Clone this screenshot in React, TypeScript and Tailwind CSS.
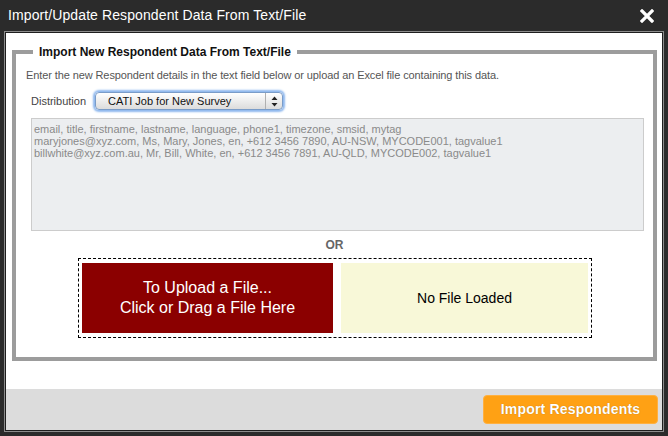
import React from "react";

export default function App() {
  const font = { fontFamily: '"Liberation Sans", Arial, sans-serif' };
  return (
    <div className="w-[668px] h-[436px] bg-[#2b2b2b] flex flex-col overflow-hidden" style={font}>
      <div className="h-[31px] flex items-center justify-between pl-[8px] pr-[14px] shrink-0">
        <span className="text-white text-[14px] tracking-[0.1px]">Import/Update Respondent Data From Text/File</span>
        <svg width="14" height="14" viewBox="0 0 14 14">
          <path d="M2 2 L12 12 M12 2 L2 12" stroke="#ffffff" strokeWidth="3.2" strokeLinecap="square" />
        </svg>
      </div>
      <div className="ml-[4px] w-[660px] h-[401px] border border-[#8c8c8c] shrink-0">
        <div className="w-full h-full border border-[#1e1e1e] bg-white flex flex-col">
          <div className="h-[356px] px-[5px] pl-[6px] shrink-0">
            <fieldset className="mt-[12px] border-4 border-[#9c9c9c] h-[316px]">
              <legend className="ml-[17px] px-[6px] text-[12px] leading-[14px] font-bold text-[#111]">
                Import New Respondent Data From Text/File
              </legend>
              <div className="pt-[9px] pl-[10px] text-[11px] leading-[14px] text-[#555] tracking-[-0.1px]">
                Enter the new Respondent details in the text field below or upload an Excel file containing this data.
              </div>
              <div className="mt-[10px] pl-[15px] h-[18px] flex items-center">
                <span className="text-[11px] text-[#444] w-[64px]">Distribution</span>
                <div className="w-[188px] h-[18px] rounded-[4px] border border-[#7a9cc8] bg-gradient-to-b from-[#ffffff] to-[#dcdcdc] shadow-[0_0_2px_2px_#8fb8ee] flex items-center">
                  <span className="flex-1 pl-[12px] text-[11px] text-[#111]">CATI Job for New Survey</span>
                  <div className="w-[17px] h-full border-l border-[#b0b0b0] flex items-center justify-center">
                    <svg width="7" height="11" viewBox="0 0 7 11">
                      <path d="M3.5 0.5 L6.5 4 L0.5 4 Z M3.5 10.5 L6.5 7 L0.5 7 Z" fill="#222" />
                    </svg>
                  </div>
                </div>
              </div>
              <div className="mt-[8px] ml-[15px] w-[613px] h-[113px] border border-[#cccccc] bg-[#eceef0] px-[2px] pt-[4px] text-[11px] leading-[12px] text-[#8a8a8a]">
                <div>email, title, firstname, lastname, language, phone1, timezone, smsid, mytag</div>
                <div>maryjones@xyz.com, Ms, Mary, Jones, en, +612 3456 7890, AU-NSW, MYCODE001, tagvalue1</div>
                <div>billwhite@xyz.com.au, Mr, Bill, White, en, +612 3456 7891, AU-QLD, MYCODE002, tagvalue1</div>
              </div>
              <div className="mt-[7px] h-[14px] text-center text-[12px] leading-[14px] font-bold text-[#666]">OR</div>
              <div className="mt-[6px] ml-[62px] w-[514px] h-[80px] border border-dashed border-black pl-[3px] pr-[3px] py-[4px] flex gap-[8px]">
                <div className="w-[251px] h-[70px] bg-[#8b0000] text-white text-[16px] leading-[20px] flex flex-col items-center justify-center">
                  <span>To Upload a File...</span>
                  <span>Click or Drag a File Here</span>
                </div>
                <div className="w-[247px] h-[70px] bg-[#f8f8d8] text-[14px] text-black flex items-center justify-center">
                  No File Loaded
                </div>
              </div>
            </fieldset>
          </div>
          <div className="flex-1 bg-[#dcdcdc] flex justify-end items-start pt-[6px] pr-[4px]">
            <button className="w-[175px] h-[29px] rounded-[4px] bg-[#ffa114] border border-[#ffb040] text-white font-bold text-[14px] tracking-[0.2px] [text-shadow:0_0_1px_rgba(0,0,0,0.35)]">
              Import Respondents
            </button>
          </div>
        </div>
      </div>
    </div>
  );
}
